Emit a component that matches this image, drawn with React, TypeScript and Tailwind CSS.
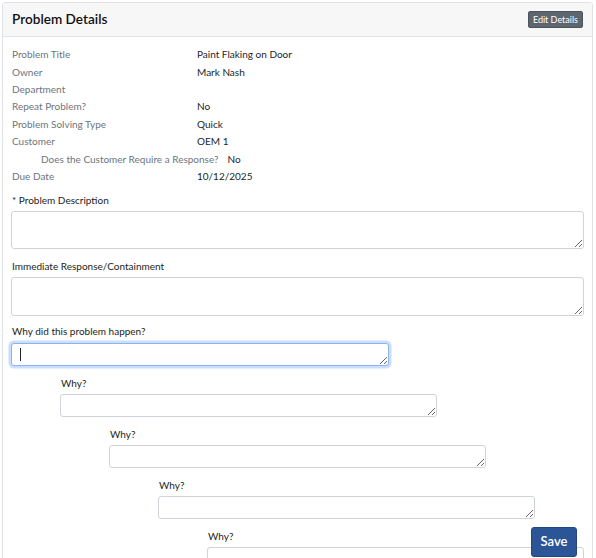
const details: { label: string; value: string; indent?: boolean }[] = [
  { label: 'Problem Title', value: 'Paint Flaking on Door' },
  { label: 'Owner', value: 'Mark Nash' },
  { label: 'Department', value: '' },
  { label: 'Repeat Problem?', value: 'No' },
  { label: 'Problem Solving Type', value: 'Quick' },
  { label: 'Customer', value: 'OEM 1' },
  { label: 'Does the Customer Require a Response?', value: 'No', indent: true },
  { label: 'Due Date', value: '10/12/2025' },
];

const whyIndents = ['ml-[49px]', 'ml-[98px]', 'ml-[147px]', 'ml-[196px]'];

function DetailRow({ label, value, indent }: { label: string; value: string; indent?: boolean }) {
  if (indent) {
    return (
      <div className="flex h-[17.4px] items-center pl-[29px]">
        <span className="text-[#6c757d]">{label}</span>
        <span className="ml-[9px] text-[#212529]">{value}</span>
      </div>
    );
  }
  return (
    <div className="flex h-[17.4px] items-center">
      <span className="w-[185px] text-[#6c757d]">{label}</span>
      <span className="text-[#212529]">{value}</span>
    </div>
  );
}

export default function App() {
  return (
    <div className="relative h-[558px] overflow-hidden bg-white font-['Lato',sans-serif] text-[10px] text-[#1b1e21]">
      <div className="ml-[2px] mr-[3px] mt-[2px] rounded-[3px] border border-[#dfe2e6]">
        <div className="flex h-[34px] items-center justify-between border-b border-[#dfe2e6] bg-[#f7f7f7] pl-[9px] pr-[9px]">
          <h2 className="text-[13.6px] font-semibold text-[#111]">Problem Details</h2>
          <button className="h-[17px] rounded-[2px] border border-[#4c555c] bg-[#5d666e] px-[4px] text-[9px] leading-[15px] text-white">
            Edit Details
          </button>
        </div>

        <div className="px-2 pt-[9px] pb-8">
          <div className="pl-px">
            {details.map((d) => (
              <DetailRow key={d.label} {...d} />
            ))}
          </div>

          <div className="mt-[7px]">
            <label className="block pl-px leading-[17px]">* Problem Description</label>
            <textarea className="mt-[1.5px] block h-[38px] w-full rounded-[3px] border border-[#ced4da] bg-white" />
          </div>

          <div className="mt-[9.5px]">
            <label className="block pl-px leading-[17px]">Immediate Response/Containment</label>
            <textarea className="mt-[1.5px] block h-[39px] w-full rounded-[3px] border border-[#ced4da] bg-white" />
          </div>

          <div className="mt-[7.5px]">
            <label className="block pl-px leading-[17px]">Why did this problem happen?</label>
            <div className="relative mt-[3px] w-[378px]">
              <textarea className="block h-[23px] w-full rounded-[3px] border border-[#8bb4f3] bg-white shadow-[0_0_0_2.5px_rgba(160,195,250,0.55)] outline-none" />
              <div className="absolute left-[9px] top-[5px] h-[13px] w-px bg-[#222]" />
            </div>
          </div>

          {whyIndents.map((cls) => (
            <div key={cls} className={`mt-[8.5px] ${cls}`}>
              <label className="block pl-px leading-[17px]">Why?</label>
              <textarea className="mt-[2.5px] block h-[23px] w-[377px] rounded-[3px] border border-[#ced4da] bg-white" />
            </div>
          ))}
        </div>
      </div>

      <button className="absolute left-[531px] top-[527px] h-[30px] w-[46px] rounded-[3px] border border-[#23467c] bg-[#2c5597] text-[13px] font-semibold text-white">
        Save
      </button>
    </div>
  );
}
